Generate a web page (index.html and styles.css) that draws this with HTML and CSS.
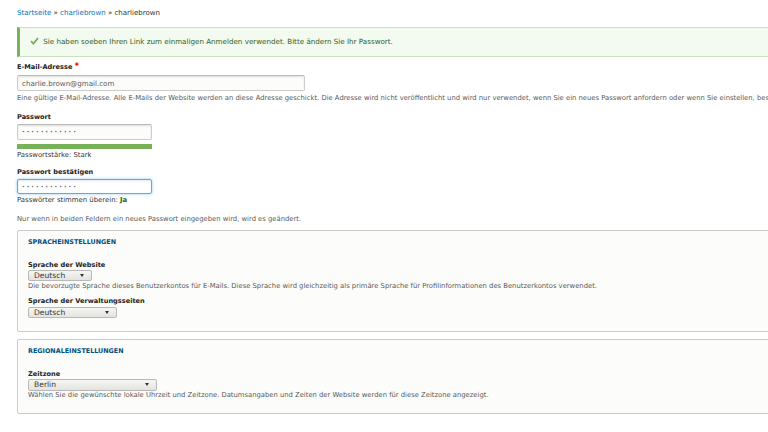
FILE: index.html
```html
<!DOCTYPE html>
<html lang="de">
<head>
  <meta charset="UTF-8">
  <title>charliebrown</title>
  <link rel="stylesheet" href="styles.css">
</head>
<body>
  <div class="page">
    <div class="breadcrumb">
      <a href="#">Startseite</a> » <a href="#">charliebrown</a> » charliebrown
    </div>

    <div class="messages">
      <svg class="check" width="9" height="8" viewBox="0 0 9 8">
        <path d="M1 4.2 L3.4 6.6 L8 1.2" fill="none" stroke="#77b259" stroke-width="1.8"/>
      </svg>
      Sie haben soeben Ihren Link zum einmaligen Anmelden verwendet. Bitte ändern Sie Ihr Passwort.
    </div>

    <div class="form-item">
      <label>E-Mail-Adresse <span class="required">*</span></label>
      <input type="text" class="form-text email" value="charlie.brown@gmail.com" readonly>
      <div class="description">Eine gültige E-Mail-Adresse. Alle E-Mails der Website werden an diese Adresse geschickt. Die Adresse wird nicht veröffentlicht und wird nur verwendet, wenn Sie ein neues Passwort anfordern oder wenn Sie einstellen, bestimmte Neuigkeiten oder Benachrichtigungen per E-Mail zu erhalten.</div>
    </div>

    <div class="form-item">
      <label>Passwort</label>
      <input type="text" class="form-text pass" value="············" readonly>
      <div class="strength"><div class="strength-bar"></div></div>
      <div class="status">Passwortstärke: Stark</div>
    </div>

    <div class="form-item confirm">
      <label>Passwort bestätigen</label>
      <input type="text" class="form-text pass focus" value="············" readonly>
      <div class="status match">Passwörter stimmen überein: <span class="ok">Ja</span></div>
    </div>

    <div class="description note">Nur wenn in beiden Feldern ein neues Passwort eingegeben wird, wird es geändert.</div>

    <fieldset class="box">
      <div class="legend">Spracheinstellungen</div>
      <label class="small">Sprache der Website</label>
      <div class="select" style="width: 64px;">Deutsch<span class="arrow"></span></div>
      <div class="description">Die bevorzugte Sprache dieses Benutzerkontos für E-Mails. Diese Sprache wird gleichzeitig als primäre Sprache für Profilinformationen des Benutzerkontos verwendet.</div>
      <label class="small second">Sprache der Verwaltungsseiten</label>
      <div class="select" style="width: 89px;">Deutsch<span class="arrow"></span></div>
    </fieldset>

    <fieldset class="box regional">
      <div class="legend">Regionaleinstellungen</div>
      <label class="small">Zeitzone</label>
      <div class="select tall" style="width: 129px;">Berlin<span class="arrow"></span></div>
      <div class="description">Wählen Sie die gewünschte lokale Uhrzeit und Zeitzone. Datumsangaben und Zeiten der Website werden für diese Zeitzone angezeigt.</div>
    </fieldset>
  </div>
</body>
</html>
```

FILE: styles.css
```css
html, body {
  margin: 0;
  background: #fff;
  overflow: hidden;
}

body {
  font-family: "DejaVu Sans", "Noto Sans", sans-serif;
  font-size: 7px;
  color: #222;
}

.page {
  width: 800px;
  padding: 8px 0 0 17px;
}

.breadcrumb {
  line-height: 10px;
  font-size: 7.05px;
  color: #333;
}

.breadcrumb a {
  color: #0074bd;
  text-decoration: none;
}

.messages {
  margin-top: 9px;
  height: 28px;
  line-height: 28px;
  background: #f3faef;
  border: 1px solid #c9e1bd;
  border-left: 3px solid #77b259;
  color: #325e1c;
  padding-left: 10px;
  font-size: 7.15px;
  white-space: nowrap;
}

.check {
  vertical-align: -1px;
  margin-right: 2px;
}

label {
  display: block;
  font-weight: bold;
  font-size: 6.6px;
  line-height: 10px;
  color: #222;
}

.required {
  color: #e00;
  font-size: 8px;
}

.form-item label {
  margin-top: 5px;
}

.form-item + .form-item label {
  margin-top: 9px;
}

.form-item.confirm label {
  margin-top: 7px;
}

.form-text {
  display: block;
  box-sizing: border-box;
  margin: 3px 0 0;
  height: 16px;
  padding: 0 4px;
  border: 1px solid #ccc;
  border-top-color: #b9b9b9;
  border-radius: 2px;
  background: #fcfcfa;
  box-shadow: inset 0 1px 2px rgba(0, 0, 0, 0.12);
  font-family: inherit;
  font-size: 7.1px;
  color: #595959;
  outline: none;
}

.email {
  width: 288px;
}

.pass {
  width: 135px;
  letter-spacing: 2px;
  font-size: 7px;
  font-weight: bold;
  color: #666;
}

.form-item + .form-item .pass {
  margin-top: 2px;
}

.form-item.confirm .pass {
  margin-top: 2px;
  height: 15px;
}

.focus {
  background: #fff;
  border-color: #40b6ff;
  box-shadow: inset 0 1px 2px rgba(0, 0, 0, 0.1), 0 0 3px #7fcbff;
}

.description {
  margin-top: 3px;
  line-height: 9px;
  font-size: 6.8px;
  color: #595959;
  white-space: nowrap;
}

.strength {
  margin-top: 4px;
  width: 135px;
  height: 5px;
  background: #e7e7e7;
}

.strength-bar {
  width: 100%;
  height: 100%;
  background: #77b259;
}

.status {
  margin-top: 2px;
  line-height: 9px;
  font-size: 6.9px;
  color: #333;
}

.match {
  margin-top: 2px;
}

.ok {
  color: #325e1c;
  font-weight: bold;
}

.note {
  margin-top: 10px;
}

.box {
  margin: 6px 0 0;
  padding: 6px 10px 13px;
  border: 1px solid #ccc;
  border-radius: 2px;
  background: #fcfcfa;
  min-width: 0;
}

.regional {
  margin-top: 7px;
  padding-top: 6px;
  padding-bottom: 13px;
}

.legend {
  line-height: 10px;
  font-size: 6.4px;
  font-weight: bold;
  text-transform: uppercase;
  color: #004f80;
  margin-bottom: 13px;
}

label.small {
  margin-top: 0;
}

label.second {
  margin-top: 5px;
}

.select {
  position: relative;
  box-sizing: border-box;
  margin-top: 0;
  height: 11px;
  line-height: 9px;
  padding-left: 5px;
  font-size: 7.6px;
  color: #333;
  border: 1px solid #b8b8b8;
  border-radius: 2px;
  background: linear-gradient(#f6f6f4, #e3e3df);
}

.second + .select {
  margin-top: 1px;
}

.select.tall {
  height: 12px;
  line-height: 10px;
}

.arrow {
  position: absolute;
  right: 7px;
  top: 3px;
  width: 0;
  height: 0;
  border-left: 2.5px solid transparent;
  border-right: 2.5px solid transparent;
  border-top: 3px solid #333;
}

.box .description {
  margin-top: 1px;
}

.regional .description {
  margin-top: 0;
}
```
